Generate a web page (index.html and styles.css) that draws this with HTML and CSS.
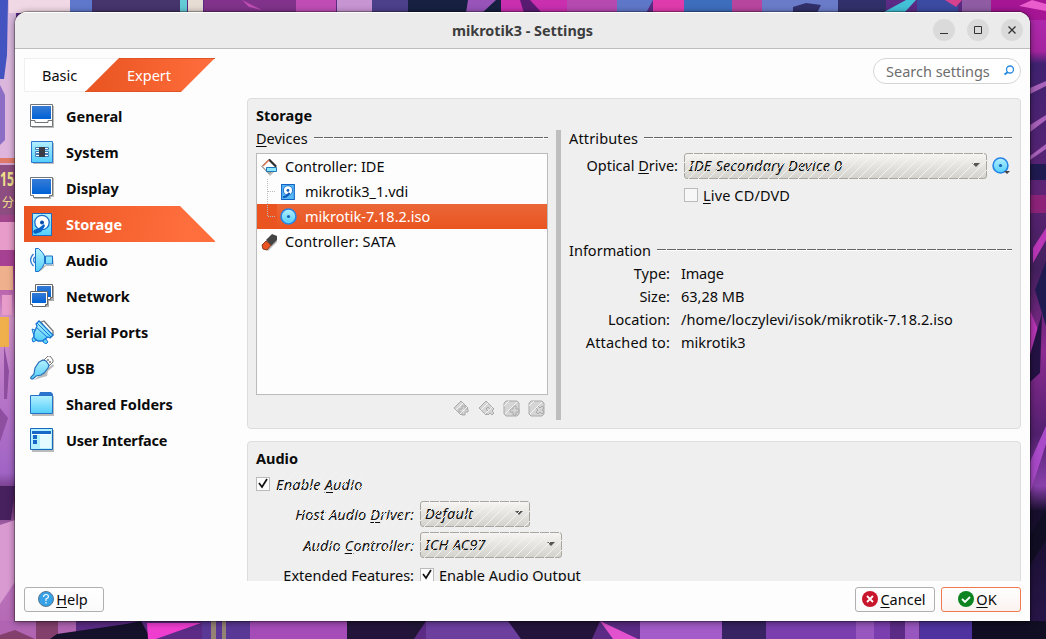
FILE: index.html
```html
<!DOCTYPE html>
<html lang="en">
<head>
<meta charset="utf-8">
<title>mikrotik3 - Settings</title>
<link rel="stylesheet" href="styles.css">
</head>
<body>
<svg class="wallpaper" width="1046" height="639" viewBox="0 0 1046 639" aria-hidden="true">
  <defs>
    <linearGradient id="sideL" x2="0" y2="1"><stop offset="0" stop-color="#d8b9dd"/><stop offset=".25" stop-color="#dfb4dd"/><stop offset=".3" stop-color="#a04a86"/><stop offset=".42" stop-color="#a83f95"/><stop offset=".5" stop-color="#d295cc"/><stop offset=".6" stop-color="#bb78c8"/><stop offset=".74" stop-color="#a064c4"/><stop offset=".78" stop-color="#5a2264"/><stop offset=".84" stop-color="#c07bc3"/><stop offset="1" stop-color="#b466b2"/></linearGradient>
    <linearGradient id="sideR" x2="0" y2="1"><stop offset="0" stop-color="#b32bb4"/><stop offset=".08" stop-color="#a5249f"/><stop offset=".1" stop-color="#3f2270"/><stop offset=".3" stop-color="#5d2375"/><stop offset=".42" stop-color="#43205e"/><stop offset=".55" stop-color="#8c2b91"/><stop offset=".68" stop-color="#52206f"/><stop offset=".76" stop-color="#8940ab"/><stop offset=".8" stop-color="#160e2b"/><stop offset="1" stop-color="#2b164d"/></linearGradient>
  </defs>
  <rect width="1046" height="639" fill="#5b2b85"/>
  <rect width="16" height="639" fill="url(#sideL)"/>
  <rect x="1029" width="17" height="639" fill="url(#sideR)"/>
  <path fill="#4354c0" d="M0 0h8l-1 55-3 24H0z"/><path fill="#8c6fc4" d="M0 85l5 10v45l-5 5z"/><path fill="#f0d8e4" d="M9 0h61v13H9z"/>
  <path fill="#e07868" d="M0 158h15v5H0z"/><path fill="#8e4d80" d="M0 165h15v50H0z"/><path fill="#efb08d" d="M0 266h13v24H0z"/><path fill="#f0b04c" d="M0 317h9v30H0z"/>
  <path fill="#e79cc9" d="M0 222h15v28H0zM2 295h10v20H2z"/><path fill="#8f4fa0" d="M0 408l8 10-8 24zM4 345l5 26-2 28H4z"/>
  <path fill="#47205e" d="M0 486h15l-4 34H0z"/><path fill="#d99ad2" d="M0 525l15-5v62l-15 22z"/>
  <path fill="#5f78cc" d="M70 0h22v13H70z"/><path fill="#46346c" d="M92 0h88v13H92z"/><path fill="#63cbd6" d="M180 0h7v13h-7z"/><path fill="#e7dcd4" d="M188 0h15v13h-15z"/><path fill="#81338b" d="M204 0h92v13h-92z"/><path fill="#bf4db5" d="M242 0l20 10-13-3zM296 0h40v13h-40z"/>
  <path fill="#c895d3" d="M337 0h57v13h-57z"/><path fill="#4c408b" d="M372 0h36v13h-36z"/><path fill="#172041" d="M408 0h93v13h-93z"/><path fill="#9854b9" d="M468 0h28l-14 13h-16z"/><path fill="#c92faf" d="M501 0h66v13h-66z"/><path fill="#5a1c73" d="M520 0h10l12 13h-18z"/><path fill="#b64ab1" d="M567 0h50v13h-50z"/><path fill="#5f77c8" d="M617 0h36l-7 13h-29z"/><path fill="#e03bac" d="M653 0h31v13h-31z"/><path fill="#3d6ebd" d="M684 0h48v13h-48z"/><path fill="#b7469f" d="M732 0h30v13h-30z"/><path fill="#6a7cc9" d="M762 0h78v13h-78z"/><path fill="#31306a" d="M793 7l13-4 15 2-4 8h-24zM838 0h48v13h-48z"/><path fill="#43c1d8" d="M884 12L906 0h10l-11 12z"/><path fill="#3c4ba2" d="M917 0h41v13h-41z"/><path fill="#d4418d" d="M945 0h17l-6 7z"/><path fill="#8f5ca4" d="M962 0h29v13h-29z"/><path fill="#a51594" d="M991 0h55v20h-55z"/><path fill="#e95ccb" d="M1019 6l13-6 14 4v7z"/>
  <path fill="#a862b9" d="M1030 88l16-7v5l-16 8zM1030 125l16-10v5l-16 12zM1030 156l16-12v5l-16 11z"/><path fill="#1f1a50" d="M1030 164h16v16h-16zM1035 290l11-29v65z"/><path fill="#b936b7" d="M1033 248l13-20v12l-13 23zM1030 310l9 22-9 39z"/><path fill="#251245" d="M1030 355l12-42-2 60-10 9z"/><path fill="#a94ac8" d="M1030 462l16-36v18l-16 49z"/><path fill="#8d2379" d="M1030 195h16v18h-16z"/>
  <path fill="#b064b2" d="M0 621h76v18H0z"/><path fill="#84406d" d="M36 621h22v18H36zM0 635l15-5 20 9H0z"/><path fill="#15112b" d="M50 639l7-5 69-10 15-3 10 18z"/><path fill="#ef3dd0" d="M148 639l-1-16h54l-45 16z"/><path fill="#5a3896" d="M202 621h48v18h-48z"/><path fill="#948375" d="M211 621h5v18h-5zM222 621h4v18h-4z"/><path fill="#a64cb9" d="M250 621h97v18h-97z"/><path fill="#211638" d="M347 621h79l-12 18h-67z"/><path fill="#6c3f9f" d="M426 621h95v18h-95z"/><path fill="#24143c" d="M351 621h58v18h-58zM508 621h92l-8 18h-71z"/><path fill="#e251ce" d="M600 621l38 18h-25z"/><path fill="#a25bc8" d="M640 621h82v18h-82z"/><path fill="#382363" d="M722 621h44v18h-44z"/><path fill="#7a3eae" d="M766 621h124v18H766z"/><path fill="#9856bf" d="M856 621h18v18h-18zM905 621h14v18h-14z"/><path fill="#4e329f" d="M920 621h52v18h-52z"/><path fill="#110d23" d="M972 621h74v18h-74zM1030 535l16-25v30l-16 25z"/>
  <text class="sign sign-number" x="0" y="186" textLength="14" lengthAdjust="spacingAndGlyphs">15</text><text class="sign sign-minute" x="2" y="207">分</text>
</svg>

<svg class="defs" width="0" height="0" aria-hidden="true">
  <defs>
    <linearGradient id="screen" x2="0" y2="1"><stop stop-color="#367bd5"/><stop offset="1" stop-color="#0062d6"/></linearGradient>
    <linearGradient id="cyan" x2="0" y2="1"><stop stop-color="#b4f0fe"/><stop offset="1" stop-color="#52cefb"/></linearGradient>
    <symbol id="disk" viewBox="0 0 24 24"><path fill="url(#cyan)" stroke="#176cc7" d="M2.500 1.500h19v22h-19z"/><circle cx="12" cy="10.500" r="7.200" fill="#fff" stroke="#176cc7" stroke-width="1.300"/><circle cx="12" cy="10.500" r="2" fill="#064fae"/><path fill="#0861c7" d="M4 18l5-2 5-4 1 2-4 6-6 2-2-2z"/></symbol>
    <symbol id="disk-small" viewBox="0 0 16 16"><path fill="#58b9f5" stroke="#1262c4" d="M1.500 .500h12v14h-12z"/><circle cx="7.500" cy="6" r="4.300" fill="#fff" stroke="#2779d6"/><circle cx="7.500" cy="6" r="1.300" fill="#0c58b8"/><path d="M3 12.500l3-1 3-3" fill="none" stroke="#0c58b8" stroke-width="2"/></symbol>
    <symbol id="cd" viewBox="0 0 16 16"><circle cx="8" cy="8" r="7" fill="url(#cyan)" stroke="#2683e6" stroke-width="1.500"/><circle cx="8" cy="8" r="1.500" fill="#1763b8"/></symbol>
  </defs>
</svg>

<main class="window">
  <header class="titlebar">
    <h1 class="window-title">mikrotik3 - Settings</h1>
    <div class="window-controls">
      <button class="control" aria-label="Minimize"><svg width="22" height="22"><path d="M7 14.500h8" stroke="#333"/></svg></button>
      <button class="control" aria-label="Maximize"><svg width="22" height="22"><path d="M7.500 7.500h7v7h-7z" fill="none" stroke="#333"/></svg></button>
      <button class="control" aria-label="Close"><svg width="22" height="22"><path d="M7.500 7.500l7 7m0-7l-7 7" stroke="#333" stroke-width="1.300"/></svg></button>
    </div>
  </header>

  <div class="body">
    <aside class="side">
      <div class="tabs">
        <svg class="tabs-shape" width="191" height="34"><defs><linearGradient id="tabfill"><stop stop-color="#e95420"/><stop offset="1" stop-color="#ff6e3d"/></linearGradient></defs><path fill="#fff" stroke="#efefef" d="M.5.500h94l-33 33H.5z"/><path fill="url(#tabfill)" d="M95 0h96l-34 34H61z"/><path d="M95 .5h96M61 33.500h96" stroke="#de5425"/></svg>
        <span class="tab tab-basic">Basic</span><span class="tab tab-expert">Expert</span>
      </div>
      <nav class="nav">
        <a class="nav-item"><svg class="nav-icon" width="24" height="24"><path fill="#bbb" d="M2 2h22v22H2z"/><path fill="#fff" stroke="#70757a" d="M.5.500h22v22H.5z"/><path fill="url(#screen)" d="M2 2h19v13H2z"/><path fill="none" stroke="#70757a" d="M1 16.500h4v2h13v-2h4"/></svg><span>General</span></a>
        <a class="nav-item"><svg class="nav-icon" width="24" height="24"><path fill="#bbb" d="M3 3h21v21H3z"/><path fill="url(#cyan)" stroke="#2c78d1" d="M1.500 1.500h21v21h-21z"/><path fill="#fff" stroke="#417db7" d="M5.500 7.500h4v2h-4zM5.500 11.500h4v2h-4zM5.500 14.500h4v2h-4zM14.500 7.500h4v2h-4zM14.500 11.500h4v2h-4zM14.500 14.500h4v2h-4z"/><path fill="#3a3c46" d="M9 7h6v10H9z"/></svg><span>System</span></a>
        <a class="nav-item"><svg class="nav-icon" width="24" height="24"><path fill="#bbb" d="M2 2h22v19h-3v2H4v-3H2z"/><path fill="#fff" stroke="#70757a" d="M.5 1.500h22v18h-3v2h-16v-2h-3z"/><path fill="url(#screen)" d="M2 3h19v15H2z"/></svg><span>Display</span></a>
        <a class="nav-item selected"><svg class="nav-icon" width="24" height="24"><use href="#disk"/></svg><span>Storage</span></a>
        <a class="nav-item"><svg class="nav-icon" width="24" height="24"><path fill="none" stroke="#347bd2" stroke-width="1.300" d="M3.500 6q-6 6 0 12M5 9q-3 3 0 6"/><path fill="#bbb" d="M7 23l6-5 3-1h7V9l1 9h-8l-4 4-3 2z"/><path fill="url(#cyan)" stroke="#1b70c8" d="M5.500.500h3q5 4 6 7.500v7q-1 4-6 8.500h-3zM15.500 8h7v8h-7z"/></svg><span>Audio</span></a>
        <a class="nav-item"><svg class="nav-icon" width="24" height="24"><path fill="#aaa" d="M7 2h17v15h-5v6H4v-3H2V9h5z"/><path fill="#fff" stroke="#666" d="M5.500.500h17v13h-2v2h-13v-2h-2z"/><path fill="url(#screen)" d="M7 2h14v11H7z"/><path fill="#fff" stroke="#666" d="M.5 7.500h17v13h-2v2h-13v-2h-2z"/><path fill="url(#screen)" d="M2 9h14v10H2z"/></svg><span>Network</span></a>
        <a class="nav-item"><svg class="nav-icon" width="24" height="24"><path fill="#fff" stroke="#777" stroke-width="1.300" d="M11 2l3-1 9 10v4l-2 2z"/><path fill="url(#cyan)" stroke="#1975d2" d="M2 9l3 1 2 10-4 2-1-3 2-3-2-7zM13 20l3-1 2 3-2 2-3-2z"/><path fill="url(#cyan)" stroke="#1975d2" stroke-width="1.300" d="M6 4l3-3 14 14-3 3-2-1-6 4H8l-4-3v-5l3-7z"/><path fill="none" stroke="#1975d2" d="M7 3l14 14M6 7l12 11"/></svg><span>Serial Ports</span></a>
        <a class="nav-item"><svg class="nav-icon" width="24" height="24"><path fill="#bbb" d="M23 8l1 2-6 5-1 5-7 2-6 2z"/><path fill="#fff" stroke="#777" d="M13 5l5-5h2l3 4v2l-5 5z"/><path d="M18 3v2m2 0v2" stroke="#333"/><path fill="url(#cyan)" stroke="#286fb9" stroke-width="1.200" d="M9 6l4-2 3 1 3 4-1 3-4 5-3 2-5 1-3 3q-3 0-2-2l3-3 1-6z"/></svg><span>USB</span></a>
        <a class="nav-item"><svg class="nav-icon" width="24" height="24"><path fill="#bbb" d="M2 4h22v20H2z"/><path fill="#2c73cd" d="M10 0h11l2 2v3H8z"/><path fill="url(#cyan)" stroke="#2471ca" d="M.5 3.500h22v18H.5z"/></svg><span>Shared Folders</span></a>
        <a class="nav-item"><svg class="nav-icon" width="24" height="24"><path fill="#bbb" d="M2 2h22v22H2z"/><path fill="#b4effe" stroke="#1768be" d="M.5.500h22v21H.5z"/><path fill="#1768c6" d="M2 3h19v3H2zM3 7h4v4H3zM3 12h4v4H3z"/><path fill="#f4ffff" d="M2 6h19v1H2z"/><path fill="#e4faff" d="M10 7h11v13H10z"/></svg><span class="tight">User Interface</span></a>
      </nav>
    </aside>

    <section class="content">
      <div class="search"><span class="search-text">Search settings</span><svg width="12" height="12"><circle cx="7" cy="4.500" r="3.500" fill="none" stroke="#278ae0" stroke-width="1.300"/><path d="M5 7L1.500 9.500" stroke="#278ae0" stroke-width="2"/></svg></div>
      <div class="viewport">
        <section class="panel storage">
          <h2 class="panel-title">Storage</h2>
          <div class="split">
            <div class="devices">
              <div class="legend"><span><u>D</u>evices</span><i class="rule"></i></div>
              <div class="tree">
                <div class="tree-row"><svg width="18" height="18"><path fill="#bbb" d="M3 11l5 5 6-5v2l-5 5z"/><path fill="#fff" stroke="#555" d="M1 8.500L8 1.500l7 7-7 7z"/><path d="M8 1.500l7 7" stroke="#2d2d2d" stroke-width="2.200"/><path d="M2 8l6-6" stroke="#dd714d" stroke-width="1.200"/><path fill="#8be6ff" stroke="#2176b8" d="M5.500 9.500h10v4h-10z"/></svg><span>Controller: IDE</span></div>
                <div class="tree-row child"><svg width="17" height="18"><use href="#disk-small" y="1" width="17" height="17"/></svg><span>mikrotik3_1.vdi</span></div>
                <div class="tree-row child active"><svg width="17" height="17"><use href="#cd"/></svg><span>mikrotik-7.18.2.iso</span></div>
                <div class="tree-row"><svg width="18" height="18"><path fill="#bbb" d="M5 16l11-9v2L7 18z"/><path fill="#444" d="M5 7l6-6 5 2v4l-6 6z"/><path fill="#e95420" stroke="#873b22" d="M1 12l4-4 5 4-4 5-4-1z"/></svg><span class="wide">Controller: SATA</span></div>
                <svg class="branches" width="24" height="60"><path d="M.5 0v37.500M1 12.500h8M1 37.500h8" stroke="#bbb" stroke-dasharray="1 1"/></svg>
              </div>
              <div class="tree-tools">
                <svg width="17" height="17"><path class="gray" d="M8 1L1 8l7 7 7-7z"/><path class="gray" d="M9 6h3v3h3v3h-3v3H9v-3H6V9h3z"/><path class="white" d="M1 12L12 1M5 16L16 5"/></svg><svg width="17" height="17"><path class="gray" d="M8 1L1 8l7 7 7-7z"/><path class="gray" d="M8 9l2-2 2 2 2-2 2 2-2 2 2 2-2 2-2-2-2 2-2-2 2-2z"/><path class="white" d="M1 12L12 1M5 16L16 5"/></svg><svg width="17" height="17"><path class="gray" d="M3 1h11l2 2v11l-2 2H3l-2-2V3z"/><path class="gray" d="M10 6h3v3h3v3h-3v3h-3v-3H7V9h3z"/><path class="white" d="M2 14L14 2M1 6l5-5"/></svg><svg width="17" height="17"><path class="gray" d="M3 1h11l2 2v11l-2 2H3l-2-2V3z"/><path class="gray" d="M8 8l2-2 2 2 2-2 2 2-2 2 2 2-2 2-2-2-2 2-2-2 2-2z"/><path class="white" d="M2 14L14 2M1 6l5-5"/></svg>
              </div>
            </div>
            <div class="splitter"></div>
            <div class="attributes">
              <div class="legend"><span class="wide">Attributes</span><i class="rule"></i></div>
              <div class="field drive"><span class="field-label">Optical <u>D</u>rive:</span><div class="combo combo-drive"><span class="wider">IDE Secondary Device 0</span><i class="arrow"></i></div><svg class="choose" width="20" height="19"><use href="#cd" x="0" y="1" width="17" height="17"/><path fill="#444" d="M12 15h6l-3 3z"/></svg></div>
              <div class="field live"><i class="check empty"></i><span class="wide"><u>L</u>ive CD/DVD</span></div>
              <div class="legend information"><span>Information</span><i class="rule"></i></div>
              <dl class="facts"><dt>Type:</dt><dd class="tight">Image</dd><dt>Size:</dt><dd>63,28 MB</dd><dt>Location:</dt><dd class="path">/home/loczylevi/isok/mikrotik-7.18.2.iso</dd><dt class="wide">Attached to:</dt><dd>mikrotik3</dd></dl>
            </div>
          </div>
        </section>
        <section class="panel audio">
          <h2 class="panel-title">Audio</h2>
          <div class="enable"><i class="check"><svg width="14" height="14"><path d="M3 6l3 4 5-8" fill="none" stroke="#111" stroke-width="1.700"/></svg></i><span class="locked wider">Enable <u>A</u>udio</span></div>
          <div class="field"><span class="field-label"><span class="locked wide">Host Audio <u>D</u>river:</span></span><div class="combo combo-host"><span class="wider">Default</span><i class="arrow"></i></div></div>
          <div class="field"><span class="field-label"><span class="locked wide">Audio <u>C</u>ontroller:</span></span><div class="combo combo-codec"><span class="wider">ICH AC97</span><i class="arrow"></i></div></div>
          <div class="field features"><span class="field-label">Extended Features:</span><i class="check"><svg width="14" height="14"><path d="M3 6l3 4 5-8" fill="none" stroke="#111" stroke-width="1.700"/></svg></i><span>Enable Audio Output</span></div>
        </section>
      </div>
    </section>
  </div>
  <footer class="actions">
    <button class="button help"><svg width="16" height="16"><circle cx="8" cy="8" r="7.500" fill="#36a1e6" stroke="#56778f"/><path d="M5.500 6q.2-2.500 2.500-2.500t2.500 2Q10.500 7 8 8v2m0 1v1.500" fill="none" stroke="#fff" stroke-width="1.200"/></svg><span><u>H</u>elp</span></button>
    <button class="button cancel"><svg width="16" height="16"><circle cx="8" cy="8" r="8" fill="#c7162b"/><path d="M5 5l6 6m0-6l-6 6" stroke="#fff" stroke-width="1.800"/></svg><span><u>C</u>ancel</span></button>
    <button class="button ok"><svg width="16" height="16"><circle cx="8" cy="8" r="8" fill="#0e8420"/><path d="M4 8l3 3 5-5" fill="none" stroke="#fff" stroke-width="1.800"/></svg><span><u>O</u>K</span></button>
  </footer>
</main>
</body>
</html>
```

FILE: styles.css
```css
* { box-sizing: border-box; }
body { margin: 0; width: 1046px; height: 639px; overflow: hidden; padding: 12px 16px 18px 15px; position: relative; font: 14.5px/20px "Noto Sans", sans-serif; color: #0b0b0b; }
.wallpaper { position: absolute; inset: 0; z-index: -1; }
.defs { position: absolute; }
.sign { fill: #f0e08b; font-family: "Noto Sans", "Noto Sans CJK JP", sans-serif; }
.sign-number { font-size: 20px; font-weight: bold; }
.sign-minute { font-size: 12px; }
h1, h2, dl, dd { margin: 0; }
button { font: inherit; color: inherit; padding: 0; }
span { white-space: nowrap; }
u { text-decoration-thickness: 1px; text-underline-offset: 2px; text-decoration-skip-ink: none; }
.tight { letter-spacing: -.2px; }
.wide { letter-spacing: .14px; }
.wider { letter-spacing: .2px; }
.path { letter-spacing: .05px; }

.window { height: 609px; background: #fdfdfd; border-radius: 12px 12px 0 0; overflow: hidden; box-shadow: 0 1px 7px #0008, 0 0 0 1px #0004; display: flex; flex-direction: column; }
.titlebar { height: 37px; flex: none; background: #ebebeb; border-bottom: 1px solid #bebebe; display: grid; grid-template-columns: 97px 1fr 97px; align-items: center; box-shadow: inset 0 1px #fff; }
.window-title { grid-column: 2; text-align: center; font-size: 14.4px; color: #3d3d3d; line-height: 20px; padding-top: 1px; }
.window-controls { display: flex; gap: 12px; }
.control { width: 22px; height: 22px; border: 0; border-radius: 50%; background: #dadada; }
.control svg, .nav-icon { display: block; }
.body { height: 532px; display: grid; grid-template-columns: 191px 774px; gap: 32px; padding: 9px 9px 0; }
.tabs { height: 34px; position: relative; display: flex; align-items: center; }
.tabs-shape { position: absolute; inset: 0; }
.tab { position: relative; }
.tab-basic { margin-left: 18px; width: 85px; }
.tab-expert { color: #fff; }
.nav { margin-top: 6px; }
.nav-item { height: 36px; padding-left: 6px; display: flex; align-items: center; gap: 12px; font-weight: bold; }
.selected { background: linear-gradient(100deg, #e95420, #ff6e3d 85%); color: #fff; clip-path: polygon(0 0, 156px 0, 191px 35px, 191px 36px, 0 36px); }
.content { min-width: 0; }
.search { width: 148px; height: 26px; margin: 0 0 14px auto; border: 1px solid #d5d5d5; border-radius: 13px; display: flex; align-items: center; justify-content: space-between; padding: 0 5px 1px 12px; color: #6d6d6d; background: #fff; }
.viewport { height: 483px; overflow: hidden; display: flex; flex-direction: column; gap: 12px; }
.panel { flex: none; background: #efefef; border: 1px solid #ddd; border-radius: 4px; padding: 6px 8px 8px; }
.storage { height: 331px; }
.audio { height: 220px; }
.panel-title { height: 20px; line-height: 20px; font-size: 14.5px; }
.split { display: grid; grid-template-columns: 292px 5px 443px; gap: 8px; }
.legend { height: 22px; display: flex; align-items: center; gap: 6px; padding-top: 3px; }
.rule { flex: 1; height: 2px; margin-top: 1px; margin-bottom: 1px; background: linear-gradient(transparent 50%, #fff 50%), repeating-linear-gradient(90deg, #666 0 9px, #efefef 9px 10px); }
.tree { height: 242px; margin-top: 6px; border: 1px solid #bbb; background: #fdfdfd; position: relative; }
.tree-row { height: 25px; display: flex; align-items: center; gap: 6px; padding-left: 4px; }
.tree-row span { padding-bottom: 2px; }
.child { padding-left: 23px; gap: 8px; }
.active { color: #fff; background: linear-gradient(90deg, #e95420 20px, transparent 20px), linear-gradient(#eb6737, #e95420); }
.branches { position: absolute; left: 10px; top: 25px; }
.tree-tools { display: flex; justify-content: flex-end; gap: 8px; padding: 5px 3px; }
.gray { fill: #d5d5d5; stroke: #aaa; }
.white { fill: none; stroke: #f4f4f4; }
.splitter { height: 290px; margin-top: 5px; background: #bebebe; }
.field { height: 25px; display: flex; align-items: center; }
.field-label { text-align: right; }
.drive { margin-top: 6px; }
.drive .field-label { width: 109px; margin-right: 6px; padding-bottom: 1px; }
.combo { height: 26px; flex: none; border: 1px solid #aaa69f; border-radius: 3px; background: linear-gradient(#f6f5f3, #d4d2cc); display: flex; align-items: center; justify-content: space-between; padding: 0 6px 1px 4px; font-style: italic; position: relative; }
.combo::after, .locked::after { content: ""; position: absolute; inset: -1px; background: linear-gradient(135deg, transparent 46.500%, #f3f3f0 46.500% 53.500%, transparent 53.500%) 0 0 / 10px 10px; }
.combo-drive { width: 303px; }
.combo-host { width: 110px; }
.combo-codec { width: 142px; }
.arrow { border: solid transparent; border-width: 4px 4px 0; border-top-color: #555; }
.choose { margin-left: 5px; }
.live { padding-left: 115px; margin-top: 4px; gap: 5px; }
.check { width: 14px; height: 14px; border: 1px solid #bbb; background: #fdfdfd; flex: none; }
.check svg { display: block; margin: -1px; }
.empty { background: #f7f7f7; }
.information { margin-top: 30px; }
.facts { margin-top: 2px; display: grid; grid-template-columns: 101px 1fr; column-gap: 11px; grid-auto-rows: 23px; align-items: center; }
.facts dt { text-align: right; }
.enable { height: 30px; margin: 1px 0 2px; display: flex; align-items: center; gap: 6px; }
.enable .locked { padding-bottom: 1px; }
.locked { font-style: italic; position: relative; display: inline-block; }
.audio .field { margin-bottom: 6px; }
.audio .field-label { width: 158px; margin-right: 6px; }
.audio .features { margin-top: -1px; }
.features .check { margin-right: 5px; }
.actions { display: grid; grid-template-columns: 80px 1fr 80px 80px; column-gap: 6px; padding: 6px 9px; }
.button { height: 25px; border: 1px solid #b0b0b0; border-radius: 3px; background: linear-gradient(#fff, #fafafa); display: flex; align-items: center; justify-content: center; gap: 2px; padding: 0 2px 1px 0; }
.cancel { grid-column: 3; }
.ok { border-color: #ef7a50; background: linear-gradient(#fff, #faf2ef); padding-right: 7px; }
```
